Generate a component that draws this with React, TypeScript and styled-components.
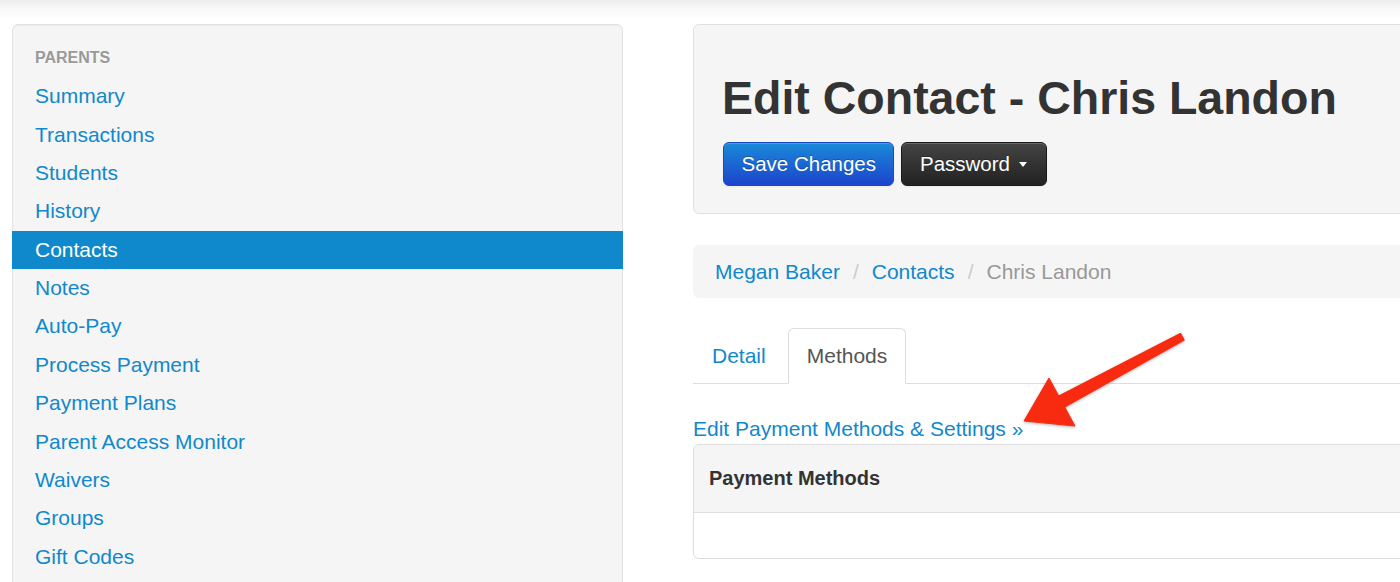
import React from "react";
import styled, { createGlobalStyle, css } from "styled-components";

const GlobalStyle = createGlobalStyle`
  html, body {
    margin: 0;
    padding: 0;
  }
  body {
    font-family: "Liberation Sans", Arial, Helvetica, sans-serif;
    font-size: 21px;
    line-height: 30px;
    color: #333;
    background: linear-gradient(to bottom, #ececec 0px, #f8f8f8 8px, #ffffff 20px) no-repeat #fff;
    overflow: hidden;
  }
  * { box-sizing: border-box; }
`;

const LINK = "#1088cc";

const Page = styled.div`
  position: relative;
  display: flex;
  align-items: flex-start;
  gap: 70px;
  padding: 24px 0 0 12px;
  height: 582px;
  overflow: hidden;
`;

const Sidebar = styled.nav`
  flex: 0 0 611px;
  width: 611px;
  padding: 13px 0 60px;
  background: #f5f5f5;
  border: 1px solid #e3e3e3;
  border-radius: 6px;
  box-shadow: inset 0 1px 1px rgba(0, 0, 0, 0.05);
`;

const NavHeader = styled.div`
  padding: 4.5px 22px;
  font-size: 16px;
  line-height: 30px;
  font-weight: bold;
  text-transform: uppercase;
  color: #999;
  text-shadow: 0 1px 0 rgba(255, 255, 255, 0.5);
`;

const NavItem = styled.a<{ $active?: boolean }>`
  display: block;
  margin: 0 -1px;
  padding: 4.2px 23px;
  line-height: 30px;
  color: ${LINK};
  text-decoration: none;
  ${(p) =>
    p.$active &&
    css`
      background: #1088cc;
      color: #fff;
    `}
`;

const Main = styled.main`
  flex: 0 0 720px;
  width: 720px;
`;

const Hero = styled.section`
  padding: 48px 29px 27.5px;
  background: #f5f5f5;
  border: 1px solid #e0e0e0;
  border-radius: 6px;
`;

const Title = styled.h2`
  margin: 0 0 17.5px -1px;
  font-size: 46.5px;
  line-height: 51px;
  font-weight: bold;
  color: #333;
  white-space: nowrap;
`;

const ButtonRow = styled.div`
  display: flex;
  gap: 7px;
`;

const Button = styled.button<{ $variant: "primary" | "inverse" }>`
  display: inline-flex;
  align-items: center;
  gap: 9px;
  height: 44px;
  padding: 0 17.5px;
  font-family: inherit;
  font-size: 20.5px;
  line-height: 30px;
  color: #fff;
  border-radius: 6px;
  border: 1px solid rgba(0, 0, 0, 0.2);
  text-shadow: 0 -1px 0 rgba(0, 0, 0, 0.25);
  box-shadow: inset 0 1px 0 rgba(255, 255, 255, 0.2), 0 1px 2px rgba(0, 0, 0, 0.05);
  cursor: pointer;
  ${(p) =>
    p.$variant === "primary"
      ? css`
          background: linear-gradient(to bottom, #1a8ad8, #1c44cc);
          border-color: #1a48c4;
        `
      : css`
          padding-right: 19px;
          background: linear-gradient(to bottom, #444444, #222222);
          border-color: #1a1a1a;
        `}
`;

const Caret = styled.span`
  display: inline-block;
  width: 0;
  height: 0;
  border-top: 5px solid #fff;
  border-left: 4.5px solid transparent;
  border-right: 4.5px solid transparent;
  margin-top: 2px;
`;

const Breadcrumb = styled.ul`
  display: flex;
  align-items: center;
  margin: 31px 0 30px;
  padding: 11.5px 22px;
  list-style: none;
  background: #f5f5f5;
  border-radius: 6px;
  line-height: 30px;
`;

const Crumb = styled.li<{ $active?: boolean }>`
  color: ${(p) => (p.$active ? "#999" : LINK)};
`;

const Divider = styled.span`
  padding: 0 13px;
  color: #ccc;
`;

const Tabs = styled.ul`
  display: flex;
  margin: 0 0 30px;
  padding: 0;
  list-style: none;
  border-bottom: 1.5px solid #ddd;
`;

const Tab = styled.li<{ $active?: boolean }>`
  margin: 0 3px -1.5px 0;
  padding: 12px 18px;
  line-height: 30px;
  border: 1.5px solid transparent;
  border-radius: 6px 6px 0 0;
  color: ${LINK};
  ${(p) =>
    p.$active &&
    css`
      color: #555;
      background: #fff;
      border-color: #ddd;
      border-bottom-color: #fff;
    `}
`;

const ActionLink = styled.a`
  display: block;
  color: ${LINK};
  text-decoration: none;
  line-height: 30px;
`;

const Panel = styled.section`
  border: 1.5px solid #ddd;
  border-radius: 6px;
  background: #fff;
  overflow: hidden;
`;

const PanelHeading = styled.div`
  padding: 18.5px 15px;
  background: #f5f5f5;
  border-bottom: 1.5px solid #ddd;
`;

const PanelTitle = styled.h3`
  margin: 0;
  font-size: 20px;
  line-height: 30px;
  font-weight: bold;
  color: #333;
`;

const PanelBody = styled.div`
  height: 45px;
`;

const Annotation = styled.svg`
  position: absolute;
  left: 1000px;
  top: 320px;
  width: 200px;
  height: 120px;
  overflow: visible;
  filter: drop-shadow(0 1px 1.5px rgba(0, 0, 0, 0.3));
`;

const navItems = [
  "Summary",
  "Transactions",
  "Students",
  "History",
  "Contacts",
  "Notes",
  "Auto-Pay",
  "Process Payment",
  "Payment Plans",
  "Parent Access Monitor",
  "Waivers",
  "Groups",
  "Gift Codes",
];

export default function App() {
  return (
    <>
      <GlobalStyle />
      <Page>
        <Sidebar>
          <NavHeader>Parents</NavHeader>
          {navItems.map((item) => (
            <NavItem key={item} $active={item === "Contacts"}>
              {item}
            </NavItem>
          ))}
        </Sidebar>
        <Main>
          <Hero>
            <Title>Edit Contact - Chris Landon</Title>
            <ButtonRow>
              <Button $variant="primary">Save Changes</Button>
              <Button $variant="inverse">
                Password <Caret />
              </Button>
            </ButtonRow>
          </Hero>
          <Breadcrumb>
            <Crumb>Megan Baker</Crumb>
            <Divider>/</Divider>
            <Crumb>Contacts</Crumb>
            <Divider>/</Divider>
            <Crumb $active>Chris Landon</Crumb>
          </Breadcrumb>
          <Tabs>
            <Tab>Detail</Tab>
            <Tab $active>Methods</Tab>
          </Tabs>
          <ActionLink>Edit Payment Methods &amp; Settings »</ActionLink>
          <Panel>
            <PanelHeading>
              <PanelTitle>Payment Methods</PanelTitle>
            </PanelHeading>
            <PanelBody />
          </Panel>
        </Main>
        <Annotation viewBox="0 0 200 120">
          <polygon
            points="183.6,20 180.4,14 58,77 64,87"
            fill="#f82a10"
            stroke="#f82a10"
            strokeWidth="2"
            strokeLinejoin="round"
          />
          <polygon
            points="24,101 49,58 75,106"
            fill="#f82a10"
            stroke="#f82a10"
            strokeWidth="1"
            strokeLinejoin="round"
          />
        </Annotation>
      </Page>
    </>
  );
}
